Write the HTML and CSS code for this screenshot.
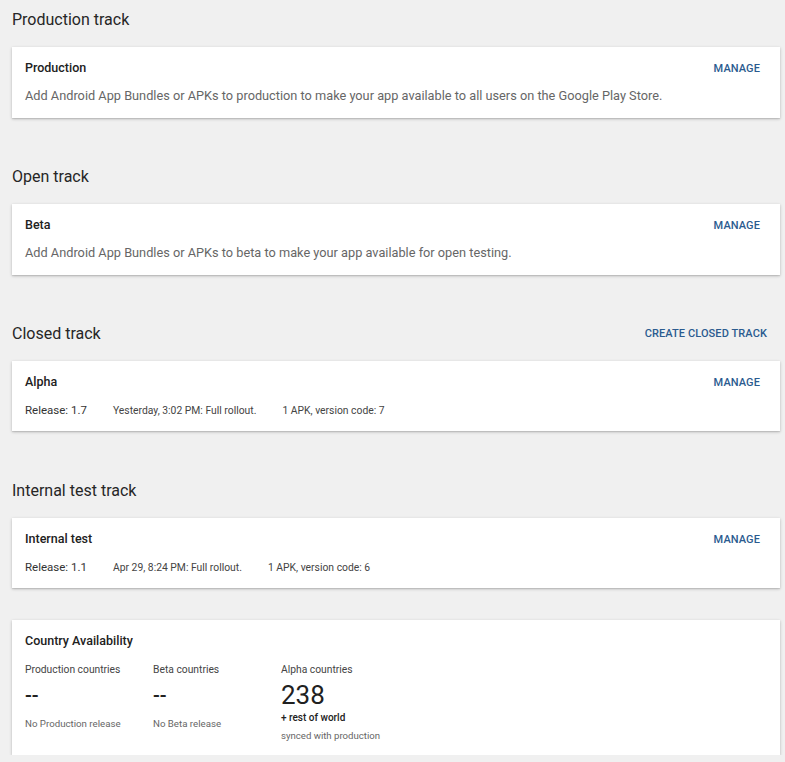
FILE: index.html
```html
<!DOCTYPE html>
<html>
<head>
<meta charset="utf-8">
<link rel="stylesheet" href="styles.css">
</head>
<body>
<main class="page">
  <section class="track">
    <div class="track-head"><h2>Production track</h2></div>
    <div class="card">
      <div class="card-row">
        <h3 class="card-title">Production</h3>
        <a class="btn">MANAGE</a>
      </div>
      <p class="desc">Add Android App Bundles or APKs to production to make your app available to all users on the Google Play Store.</p>
    </div>
  </section>

  <section class="track">
    <div class="track-head"><h2>Open track</h2></div>
    <div class="card">
      <div class="card-row">
        <h3 class="card-title">Beta</h3>
        <a class="btn">MANAGE</a>
      </div>
      <p class="desc">Add Android App Bundles or APKs to beta to make your app available for open testing.</p>
    </div>
  </section>

  <section class="track">
    <div class="track-head"><h2>Closed track</h2><a class="btn head-btn">CREATE CLOSED TRACK</a></div>
    <div class="card release-card">
      <div class="card-row">
        <h3 class="card-title">Alpha</h3>
        <a class="btn">MANAGE</a>
      </div>
      <div class="meta">
        <span class="release">Release: 1.7</span>
        <span class="info">Yesterday, 3:02 PM: Full rollout.</span>
        <span class="info">1 APK, version code: 7</span>
      </div>
    </div>
  </section>

  <section class="track last">
    <div class="track-head"><h2>Internal test track</h2></div>
    <div class="card release-card">
      <div class="card-row">
        <h3 class="card-title">Internal test</h3>
        <a class="btn">MANAGE</a>
      </div>
      <div class="meta">
        <span class="release">Release: 1.1</span>
        <span class="info">Apr 29, 8:24 PM: Full rollout.</span>
        <span class="info">1 APK, version code: 6</span>
      </div>
    </div>
  </section>

  <section class="card country">
    <h3 class="card-title">Country Availability</h3>
    <div class="cols">
      <div class="col">
        <div class="col-label">Production countries</div>
        <div class="col-num dash">--</div>
        <div class="col-note">No Production release</div>
      </div>
      <div class="col">
        <div class="col-label">Beta countries</div>
        <div class="col-num dash">--</div>
        <div class="col-note">No Beta release</div>
      </div>
      <div class="col">
        <div class="col-label">Alpha countries</div>
        <div class="col-num">238</div>
        <div class="col-extra">+ rest of world</div>
        <div class="col-sync">synced with production</div>
      </div>
    </div>
  </section>
</main>
</body>
</html>
```

FILE: styles.css
```css
* { box-sizing: border-box; }
html, body { margin: 0; padding: 0; }
body {
  background: #f0f0f0;
  font-family: Roboto, "Liberation Sans", Arial, sans-serif;
  color: #212121;
}
.page {
  padding: 0 5px 0 12px;
}
.track {
  margin-bottom: 38px;
}
.track.last {
  margin-top: 39px;
  margin-bottom: 32px;
}
.track:first-child .track-head { margin-top: -1px; }
.track-head {
  height: 40px;
  display: flex;
  align-items: center;
  justify-content: space-between;
  margin-bottom: 8px;
}
.track-head h2 {
  margin: 0;
  font-size: 16px;
  font-weight: 400;
  color: #262626;
}
.head-btn { margin-right: 13px; }
.card {
  background: #fff;
  box-shadow: 0 1px 3px rgba(0,0,0,0.22), 0 1px 1px rgba(0,0,0,0.08);
  padding: 13px 20px 14px 13px;
}
.release-card {
  padding-bottom: 13px;
}
.card-row {
  display: flex;
  align-items: center;
  justify-content: space-between;
  height: 16px;
}
.card-title {
  margin: 0;
  font-size: 12.5px;
  font-weight: 500;
  line-height: 16px;
  color: #212121;
}
.btn {
  font-size: 11px;
  font-weight: 500;
  color: #2b5b8f;
  letter-spacing: 0.1px;
  cursor: pointer;
}
.desc {
  margin: 12px 0 0;
  font-size: 12.75px;
  line-height: 16px;
  color: #666;
}
.meta {
  margin-top: 12px;
  height: 16px;
  display: flex;
  align-items: center;
  gap: 26px;
}
.release {
  font-size: 11.5px;
  color: #333;
}
.info {
  font-size: 10.35px;
  color: #444;
}
.country {
  padding-bottom: 12px;
}
.cols {
  display: flex;
  margin-top: 14px;
}
.col {
  width: 128px;
  display: flex;
  flex-direction: column;
}
.col-label {
  font-size: 10.3px;
  line-height: 14px;
  color: #444;
}
.col-num {
  font-size: 26px;
  line-height: 30px;
  margin-top: 3px;
  color: #212121;
}
.dash {
  font-weight: 500;
  font-size: 20px;
}
.col-note {
  font-size: 9.7px;
  line-height: 14px;
  color: #666;
  margin-top: 7px;
}
.col-extra {
  font-size: 10px;
  font-weight: 500;
  line-height: 14px;
  color: #212121;
  margin-top: 1px;
}
.col-sync {
  font-size: 9.6px;
  line-height: 14px;
  color: #666;
  margin-top: 4px;
}
```
